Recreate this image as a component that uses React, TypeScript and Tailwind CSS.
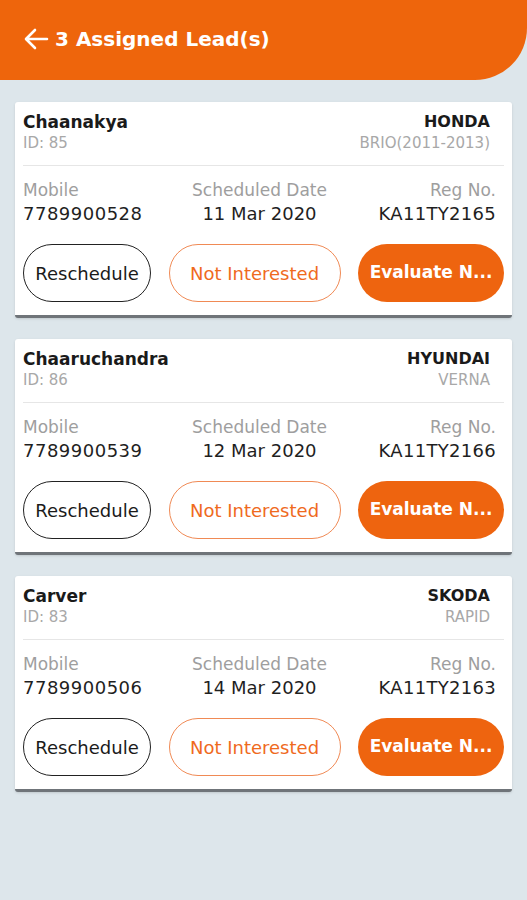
import React from "react";

interface Lead {
  name: string;
  id: number;
  make: string;
  model: string;
  mobile: string;
  date: string;
  reg: string;
}

const leads: Lead[] = [
  { name: "Chaanakya", id: 85, make: "HONDA", model: "BRIO(2011-2013)", mobile: "7789900528", date: "11 Mar 2020", reg: "KA11TY2165" },
  { name: "Chaaruchandra", id: 86, make: "HYUNDAI", model: "VERNA", mobile: "7789900539", date: "12 Mar 2020", reg: "KA11TY2166" },
  { name: "Carver", id: 83, make: "SKODA", model: "RAPID", mobile: "7789900506", date: "14 Mar 2020", reg: "KA11TY2163" },
];

const LeadCard = ({ lead }: { lead: Lead }) => {
  return (
    <div className="bg-white rounded-[3px] border-b-[3px] border-[#6f7479] px-2 pt-[9px] pb-[13px] shadow-sm">
      <div className="flex justify-between items-start">
        <div className="flex flex-col">
          <span className="font-bold text-[17px] leading-[22px] text-[#1a1a1a]">{lead.name}</span>
          <span className="text-[15px] leading-[20px] text-[#a8a8a8]">ID: {lead.id}</span>
        </div>
        <div className="flex flex-col items-end pr-[14px]">
          <span className="font-bold text-[16px] leading-[22px] text-[#1a1a1a]">{lead.make}</span>
          <span className="text-[15px] leading-[20px] text-[#a8a8a8]">{lead.model}</span>
        </div>
      </div>
      <div className="h-px bg-[#e6e6e6] mt-[12px] mb-[13px]" />
      <div className="grid grid-cols-3 items-start pr-[8px]">
        <div className="flex flex-col">
          <span className="text-[17px] leading-[23px] text-[#9e9e9e]">Mobile</span>
          <span className="text-[18px] leading-[23px] text-[#1f1f1f] tracking-[0.5px]">{lead.mobile}</span>
        </div>
        <div className="flex flex-col items-center whitespace-nowrap">
          <span className="text-[17px] leading-[23px] text-[#9e9e9e]">Scheduled Date</span>
          <span className="text-[18px] leading-[23px] text-[#1f1f1f]">{lead.date}</span>
        </div>
        <div className="flex flex-col items-end">
          <span className="text-[17px] leading-[23px] text-[#9e9e9e]">Reg No.</span>
          <span className="text-[18px] leading-[23px] text-[#1f1f1f] tracking-[0.3px]">{lead.reg}</span>
        </div>
      </div>
      <div className="flex justify-between mt-[19px]">
        <button className="w-[128px] h-[58px] rounded-full border border-[#222] text-[18px] text-[#1a1a1a] bg-white">
          Reschedule
        </button>
        <button className="w-[172px] h-[58px] rounded-full border border-[#f08a55] text-[18px] text-[#ef6a1e] bg-white">
          Not Interested
        </button>
        <button className="w-[146px] h-[58px] rounded-full bg-[#ee640f] text-[17px] font-bold text-white">
          Evaluate N...
        </button>
      </div>
    </div>
  );
};

export default function App() {
  return (
    <div className="min-h-[900px] bg-[#dde6eb] font-['DejaVu_Sans',sans-serif]">
      <div className="h-[80px] bg-[#ee650c] rounded-br-[52px] flex items-center pl-[24px] pb-[2px]">
        <svg width="25" height="22" viewBox="0 0 25 22" fill="none" stroke="white" strokeWidth="2.6" strokeLinecap="round" strokeLinejoin="round">
          <path d="M23 11H3M11 2L2 11l9 9" />
        </svg>
        <span className="ml-[6px] text-white font-bold text-[20px]">3 Assigned Lead(s)</span>
      </div>
      <div className="px-[15px] pt-[22px] flex flex-col gap-[21px]">
        {leads.map((l) => (
          <LeadCard key={l.id} lead={l} />
        ))}
      </div>
    </div>
  );
}
